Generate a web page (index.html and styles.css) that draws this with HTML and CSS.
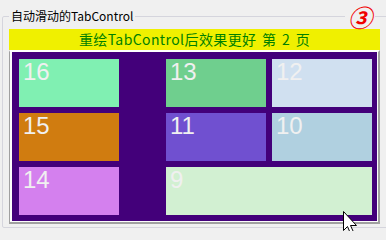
FILE: index.html
```html
<!DOCTYPE html>
<html lang="zh-CN">
<head>
<meta charset="utf-8">
<title>自动滑动的TabControl</title>
<link rel="stylesheet" href="styles.css">
</head>
<body>
<fieldset class="group">
  <legend class="group-title">自动滑动的TabControl</legend>
  <span class="badge">③</span>
  <div class="banner">重绘TabControl后效果更好 第 2 页</div>
  <div class="panel">
    <div class="page">
      <div class="tile c1 r1 t16">16</div>
      <div class="tile c3 r1 t13">13</div>
      <div class="tile c4 r1 t12">12</div>
      <div class="tile c1 r2 t15">15</div>
      <div class="tile c3 r2 t11">11</div>
      <div class="tile c4 r2 t10">10</div>
      <div class="tile c1 r3 t14">14</div>
      <div class="tile c34 r3 t9">9</div>
    </div>
  </div>
</fieldset>
<svg class="cursor" width="18" height="24" viewBox="0 0 18 24">
  <path d="M0.5,0.5 L0.5,19.5 L4.5,15.5 L7.5,22.5 L10.5,21 L7.5,14.5 L13.5,14.5 Z" fill="#fff" stroke="#000" stroke-width="1" stroke-linejoin="miter"/>
</svg>
</body>
</html>
```
FILE: styles.css
```css
html, body {
  margin: 0;
  padding: 0;
  overflow: hidden;
  background: #f0f0f0;
}
body {
  width: 386px;
  height: 231px;
  position: relative;
  font-family: "Noto Sans CJK SC", "Noto Sans", sans-serif;
}
.group {
  position: relative;
  margin: 8px 0 0 2px;
  padding: 5px 10px 3px 6px;
  width: 371px;
  border: 1px solid #d5d5dd;
  border-radius: 2px;
  min-width: 0;
}
.group-title {
  padding: 0 2px;
  font-size: 12px;
  line-height: 16px;
  color: #000;
}
.badge {
  position: absolute;
  top: -19px;
  left: 342px;
  padding: 0 3px;
  background: #f0f0f0;
  color: #f00000;
  font-size: 24px;
  line-height: 24px;
  font-style: italic;
  font-weight: bold;
}
.banner {
  height: 21px;
  line-height: 21px;
  background: #f0f000;
  color: #008000;
  font-size: 14px;
  letter-spacing: 0.4px;
  word-spacing: 2px;
  text-align: center;
}
.panel {
  border-style: solid;
  border-width: 2px 2px 2px 1px;
  border-color: #ffffff #a0a0a0 #a0a0a0 #a0a0a0;
  padding: 0 1px 1px 2px;
  background: #fcfcfc;
}
.page {
  background: #43007a;
  display: grid;
  grid-template-columns: 100px 35px 100px 100px;
  grid-template-rows: 48px 48px 48px;
  gap: 6px;
  padding: 7px 5px 6px 7px;
}
.tile {
  font-family: "Liberation Sans", Arial, sans-serif;
  font-size: 24px;
  line-height: 24px;
  color: #f0f0f0;
  padding: 1px 4px;
}
.c1 { grid-column: 1; }
.c3 { grid-column: 3; }
.c4 { grid-column: 4; }
.c34 { grid-column: 3 / 5; }
.r1 { grid-row: 1; }
.r2 { grid-row: 2; }
.r3 { grid-row: 3; }
.t16 { background: #80f0b2; }
.t13 { background: #6fcf8e; }
.t12 { background: #d0e0f0; }
.t15 { background: #d07c10; }
.t11 { background: #7050d0; }
.t10 { background: #b0d0e0; }
.t14 { background: #d480ee; }
.t9 { background: #d2f0d2; }
.cursor {
  position: absolute;
  left: 343px;
  top: 211px;
}
```
